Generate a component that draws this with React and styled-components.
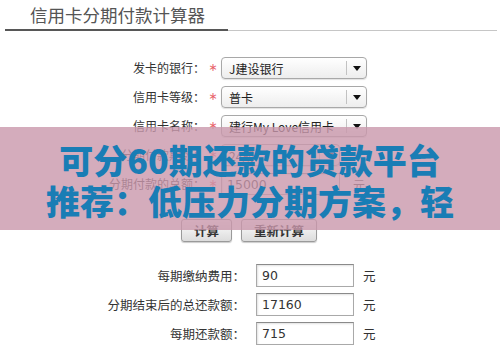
import React from "react";
import styled, { createGlobalStyle } from "styled-components";

const Global = createGlobalStyle`
  html, body { margin: 0; padding: 0; background: #fff; }
  body { font-family: "Noto Sans CJK SC", "Noto Sans", sans-serif; }
`;

const Page = styled.div`
  position: relative;
  width: 500px;
  height: 358px;
  overflow: hidden;
  background: #fff;
`;

const Header = styled.header`
  box-sizing: border-box;
  height: 29px;
  padding: 5px 0 0 30px;
`;

const Title = styled.h1`
  margin: 0;
  font-size: 17.5px;
  line-height: 20px;
  font-weight: 400;
  color: #555;
`;

const Rule = styled.div`
  display: flex;
  align-items: center;
  height: 2px;
  margin: 0 3px 0 5px;
`;

const RuleDark = styled.div`
  width: 223px;
  height: 2px;
  background: #575757;
`;

const RuleLight = styled.div`
  flex: 1;
  height: 1px;
  background: #c6c6c6;
`;

const Form = styled.div`
  display: grid;
  grid-template-columns: 205px 16px auto;
  row-gap: 7px;
  align-items: center;
  margin-top: 26px;
`;

const Label = styled.div`
  text-align: right;
  font-size: 12px;
  line-height: 22px;
  color: #333;
  white-space: nowrap;
`;

const Star = styled.span`
  font-family: "DejaVu Sans", sans-serif;
  color: #e8626a;
  font-size: 11px;
  line-height: 22px;
  text-align: center;
`;

const Field = styled.div`
  display: flex;
  align-items: center;
  gap: 13px;
`;

const Select = styled.div`
  box-sizing: border-box;
  width: ${(p) => p.$w || 146}px;
  height: 22px;
  border: 1px solid #a8a8a8;
  border-radius: 4px;
  background: linear-gradient(#ffffff, #ededed);
  box-shadow: 0 1px 1px rgba(0, 0, 0, 0.12);
  display: flex;
  align-items: center;
`;

const SelectValue = styled.span`
  flex: 1;
  padding-left: 7px;
  font-size: 12px;
  color: #222;
  white-space: nowrap;
  overflow: hidden;
`;

const SelectArrow = styled.span`
  width: 19px;
  height: 14px;
  border-left: 1px solid #c2c2c2;
  display: flex;
  align-items: center;
  justify-content: center;
`;

const TextBox = styled.div`
  box-sizing: border-box;
  width: ${(p) => p.$w || 119}px;
  height: ${(p) => p.$h || 22}px;
  border: 1px solid #a9a9a9;
  border-top-color: #8a8a8a;
  background: #fff;
  box-shadow: inset 1px 1px 2px rgba(0, 0, 0, 0.12);
  padding-left: 5px;
  display: flex;
  align-items: center;
  font-family: "DejaVu Sans", sans-serif;
  font-size: 12.5px;
  color: #333;
`;

const Unit = styled.span`
  font-size: ${(p) => p.$size || 12}px;
  color: #333;
`;

const Buttons = styled.div`
  display: flex;
  gap: 9px;
  padding-left: 181px;
  margin-top: 24px;
`;

const Button = styled.button`
  box-sizing: border-box;
  width: ${(p) => p.$w}px;
  height: 23px;
  padding: 0;
  border: 1px solid #9a9a9a;
  border-radius: 3px;
  background: linear-gradient(#ffffff, #dcdcdc);
  box-shadow: 0 1px 1px rgba(0, 0, 0, 0.2);
  font-family: "Noto Sans CJK SC", sans-serif;
  font-size: 12.5px;
  font-weight: 700;
  color: #333;
`;

const Results = styled.div`
  display: flex;
  flex-direction: column;
  gap: 6px;
  margin-top: 22px;
`;

const ResultRow = styled.div`
  display: flex;
  align-items: center;
`;

const ResultLabel = styled.div`
  width: 245px;
  text-align: right;
  font-size: 12.5px;
  color: #333;
  white-space: nowrap;
  margin-right: 11px;
`;

const ResultUnit = styled(Unit)`
  margin-left: 9px;
`;

const Band = styled.div`
  position: absolute;
  left: 0;
  right: 0;
  top: 127px;
  height: 103px;
  background: rgba(201, 151, 171, 0.8);
  display: flex;
  flex-direction: column;
  align-items: center;
  justify-content: center;
  padding-top: 2px;
  box-sizing: border-box;
`;

const BandLine = styled.div`
  font-family: "Noto Sans CJK SC", sans-serif;
  font-size: 34px;
  font-weight: 900;
  line-height: 41px;
  color: #197db5;
  white-space: nowrap;
`;

const Arrow = () => (
  <svg width="8" height="5" viewBox="0 0 8 5">
    <path d="M0 0H8L4 5Z" fill="#111" />
  </svg>
);

const SelectField = ({ value, w }) => (
  <Select $w={w}>
    <SelectValue>{value}</SelectValue>
    <SelectArrow>
      <Arrow />
    </SelectArrow>
  </Select>
);

const formRows = [
  { label: "发卡的银行：", kind: "select", value: "J建设银行" },
  { label: "信用卡等级：", kind: "select", value: "普卡" },
  { label: "信用卡名称：", kind: "select", value: "建行My Love信用卡" },
  { label: "分期付款期数：", kind: "select", value: "24期", w: 119 },
  { label: "分期付款的总额：", kind: "input", value: "15000", unit: "元" },
];

const results = [
  { label: "每期缴纳费用：", value: "90" },
  { label: "分期结束后的总还款额：", value: "17160" },
  { label: "每期还款额：", value: "715" },
];

export default function App() {
  return (
    <Page>
      <Global />
      <Header>
        <Title>信用卡分期付款计算器</Title>
      </Header>
      <Rule>
        <RuleDark />
        <RuleLight />
      </Rule>

      <Form>
        {formRows.map((r) => (
          <React.Fragment key={r.label}>
            <Label>{r.label}</Label>
            <Star>∗</Star>
            <Field>
              {r.kind === "select" ? (
                <SelectField value={r.value} w={r.w} />
              ) : (
                <TextBox>{r.value}</TextBox>
              )}
              {r.unit && <Unit>{r.unit}</Unit>}
            </Field>
          </React.Fragment>
        ))}
      </Form>

      <Buttons>
        <Button $w={51}>计算</Button>
        <Button $w={76}>重新计算</Button>
      </Buttons>

      <Results>
        {results.map((r) => (
          <ResultRow key={r.label}>
            <ResultLabel>{r.label}</ResultLabel>
            <TextBox $w={98} $h={23}>
              {r.value}
            </TextBox>
            <ResultUnit $size={12.5}>元</ResultUnit>
          </ResultRow>
        ))}
      </Results>

      <Band>
        <BandLine>可分60期还款的贷款平台</BandLine>
        <BandLine>推荐：低压力分期方案，轻</BandLine>
      </Band>
    </Page>
  );
}
